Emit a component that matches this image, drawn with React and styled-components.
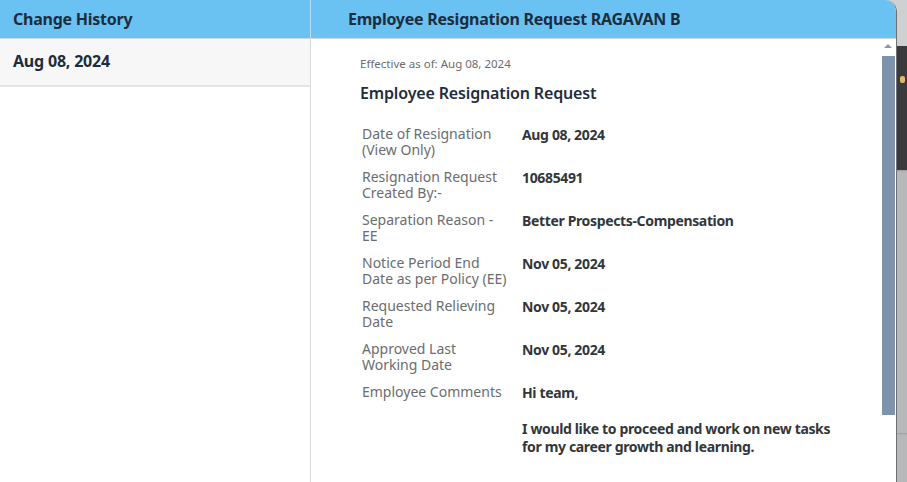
import React from "react";
import styled, { createGlobalStyle } from "styled-components";

const Global = createGlobalStyle`
  html, body { margin: 0; padding: 0; }
  body { font-family: "Noto Sans", "Open Sans", sans-serif; background: #3a3a3a; }
`;

const Screen = styled.div`
  width: 907px;
  height: 482px;
  overflow: hidden;
  display: flex;
  position: relative;
  background: linear-gradient(
    to bottom,
    #cfd0d2 0px,
    #cfd0d2 46px,
    #3a3a3c 46px,
    #3a3a3c 170px,
    #9c9d9f 170px,
    #b7b8ba 172px,
    #b7b8ba 433px,
    #9c9d9f 433px,
    #b7b8ba 435px
  );
`;

const Dialog = styled.div`
  width: 896px;
  height: 482px;
  display: flex;
  flex-direction: column;
  background: #fff;
  border-top-right-radius: 12px;
  border-right: 1px solid #6f7072;
  overflow: hidden;
  flex-shrink: 0;
`;

const HeaderBar = styled.div`
  display: flex;
  height: 38px;
  background: #6ac2f2;
  border-bottom: 1px solid #d3d6d9;
  flex-shrink: 0;
`;

const HeaderCell = styled.div`
  flex: ${(p) => (p.$side ? "0 0 311px" : "1")};
  border-right: ${(p) => (p.$side ? "1px solid #c6dbea" : "none")};
  padding-left: ${(p) => (p.$side ? "13px" : "37px")};
  display: flex;
  align-items: center;
  font-size: 16px;
  font-weight: 700;
  letter-spacing: -0.25px;
  color: #1d2d3e;
  box-sizing: border-box;
`;

const Body = styled.div`
  flex: 1;
  display: flex;
  min-height: 0;
`;

const SideList = styled.div`
  flex: 0 0 311px;
  border-right: 1px solid #d9d9d9;
  box-sizing: border-box;
`;

const ListItem = styled.div`
  height: 48px;
  box-sizing: border-box;
  padding: 12px 0 0 13px;
  background: #f7f7f7;
  border-bottom: 2px solid #e4e4e4;
  font-size: 16px;
  line-height: 20px;
  font-weight: 700;
  letter-spacing: -0.2px;
  color: #1d2d3e;
`;

const Content = styled.div`
  flex: 1;
  padding: 18px 0 0 49px;
  min-width: 0;
`;

const Effective = styled.div`
  font-size: 11.5px;
  line-height: 14px;
  color: #6a6d70;
`;

const Heading = styled.div`
  margin-top: 12px;
  font-size: 16px;
  line-height: 20px;
  font-weight: 600;
  letter-spacing: -0.15px;
  color: #1d2d3e;
`;

const Fields = styled.div`
  margin-top: 23px;
  margin-left: 2px;
  display: grid;
  grid-template-columns: 160px 312px;
  row-gap: 11px;
`;

const Label = styled.div`
  font-size: 14px;
  line-height: 16px;
  color: #6a6d70;
  padding-right: 12px;
`;

const Value = styled.div`
  font-size: 14px;
  line-height: 18px;
  font-weight: 700;
  letter-spacing: -0.35px;
  color: #32363a;
  white-space: pre-line;
`;

const Scrollbar = styled.div`
  flex: 0 0 14px;
  display: flex;
  flex-direction: column;
  align-items: center;
  padding-right: 1px;
`;

const ArrowUp = styled.div`
  margin-top: 5px;
  width: 0;
  height: 0;
  border-left: 4px solid transparent;
  border-right: 4px solid transparent;
  border-bottom: 4px solid #8c9aaa;
`;

const Thumb = styled.div`
  margin-top: 8px;
  width: 13px;
  height: 359px;
  background: #7d93ab;
`;

const OutsideMark = styled.div`
  position: absolute;
  right: 2px;
  top: 76px;
  width: 5px;
  height: 7px;
  border-radius: 2px;
  background: #e2b66a;
`;

const fields = [
  ["Date of Resignation (View Only)", "Aug 08, 2024"],
  ["Resignation Request Created By:-", "10685491"],
  ["Separation Reason - EE", "Better Prospects-Compensation"],
  ["Notice Period End Date as per Policy (EE)", "Nov 05, 2024"],
  ["Requested Relieving Date", "Nov 05, 2024"],
  ["Approved Last Working Date", "Nov 05, 2024"],
  [
    "Employee Comments",
    "Hi team,\n\nI would like to proceed and work on new tasks for my career growth and learning.",
  ],
];

export default function App() {
  return (
    <>
      <Global />
      <Screen>
        <Dialog>
          <HeaderBar>
            <HeaderCell $side>Change History</HeaderCell>
            <HeaderCell>Employee Resignation Request RAGAVAN B</HeaderCell>
          </HeaderBar>
          <Body>
            <SideList>
              <ListItem>Aug 08, 2024</ListItem>
            </SideList>
            <Content>
              <Effective>Effective as of: Aug 08, 2024</Effective>
              <Heading>Employee Resignation Request</Heading>
              <Fields>
                {fields.map(([l, v]) => (
                  <React.Fragment key={l}>
                    <Label>{l}</Label>
                    <Value>{v}</Value>
                  </React.Fragment>
                ))}
              </Fields>
            </Content>
            <Scrollbar>
              <ArrowUp />
              <Thumb />
            </Scrollbar>
          </Body>
        </Dialog>
        <OutsideMark />
      </Screen>
    </>
  );
}
